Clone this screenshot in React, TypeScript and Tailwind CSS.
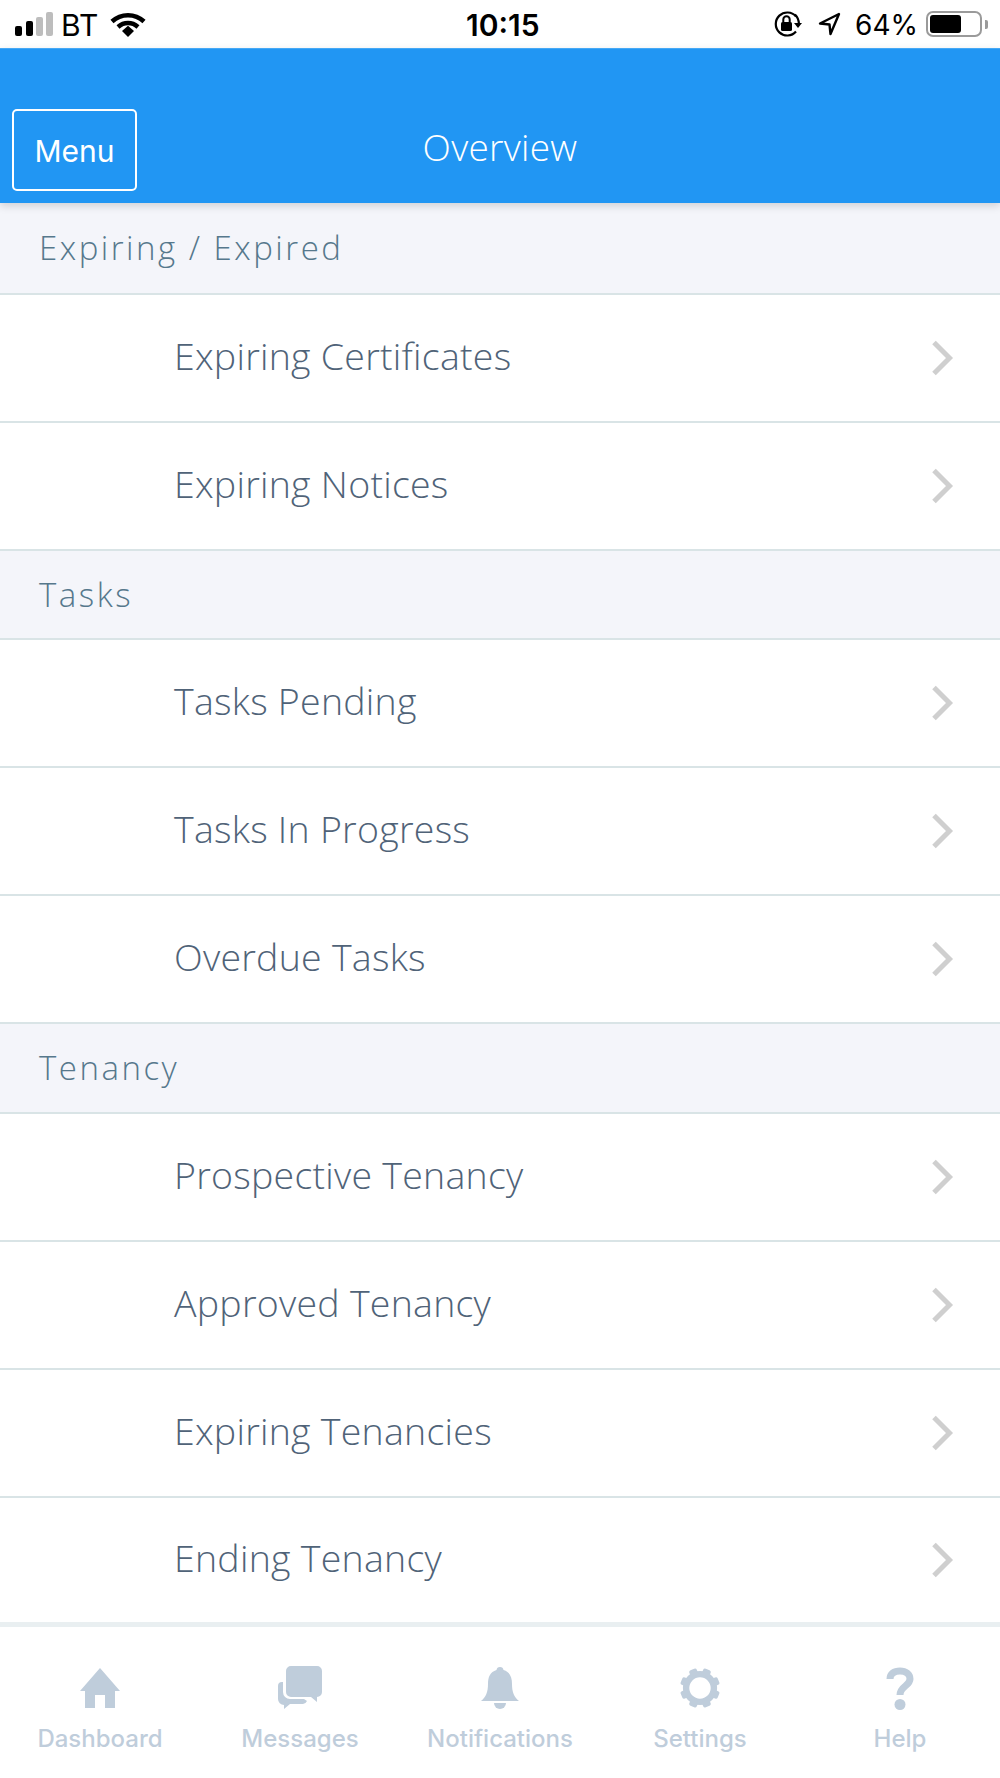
import React from "react";

const F1 = { fontFamily: '"Open Sans",sans-serif' };

function Chevron() {
  return (
    <svg width="24" height="38" viewBox="0 0 24 38" fill="none">
      <path d="M4 3.5L19.5 19L4 34.5" stroke="#cfcfcf" strokeWidth="5" />
    </svg>
  );
}
function Row({ t, last }: { t: string; last?: boolean }) {
  return (
    <div className={"bg-white flex items-center pl-[174px] pr-[46px] justify-between " + (last ? "h-[124px]" : "h-[128px] border-b-2 border-[#d9e4e6]")}>
      <span className="text-[37.5px] font-light text-[#506378] pb-[4px] tracking-[0.25px]" style={F1}>{t}</span>
      <Chevron />
    </div>
  );
}
function Head({ t, h }: { t: string; h: string }) {
  return (
    <div className={"bg-[#f4f5fa] border-b-2 border-[#d9e4e6] flex items-center pl-[39px] " + h}>
      <span className="text-[33px] font-light text-[#56788c] tracking-[2.5px]" style={F1}>{t}</span>
    </div>
  );
}
function Tab({ label, children }: { label: string; children: React.ReactNode }) {
  return (
    <div className="flex-1 flex flex-col items-center pt-[38px]">
      <div className="h-[46px] flex items-center justify-center">{children}</div>
      <span className="text-[24px] font-medium text-[#bfcddb] leading-[30px] mt-[13px]">{label}</span>
    </div>
  );
}
export default function App() {
  const teeth = [0, 45, 90, 135, 180, 225, 270, 315];
  return (
    <div className="w-[1000px] h-[1778px] flex flex-col overflow-hidden bg-white" style={{ fontFamily: '"Inter",sans-serif' }}>
      <div className="h-[48px] bg-white flex items-center justify-between pl-[15px] pr-[12px] text-[30px] text-black relative">
        <div className="flex items-center">
          <svg width="38" height="24" viewBox="0 0 38 24"><rect x="0" y="14" width="7" height="10" rx="2" fill="#000"/><rect x="11" y="9" width="7" height="15" rx="2" fill="#000"/><rect x="21" y="5" width="7" height="19" rx="2" fill="#bdbdbd"/><rect x="31" y="0" width="7" height="24" rx="2" fill="#bdbdbd"/></svg>
          <span className="ml-[8px] pt-[2px]">BT</span>
          <svg width="36" height="25" viewBox="0 0 36 25" fill="none" className="ml-[12px]">
            <path d="M2 9.5C11 1 25 1 34 9.5" stroke="#000" strokeWidth="4.5"/>
            <path d="M8 15C14 9.8 22 9.8 28 15" stroke="#000" strokeWidth="4.5"/>
            <path d="M12 19L18 13.8L24 19L18 25Z" fill="#000"/>
          </svg>
        </div>
        <span className="absolute left-[466px] pt-[2px] font-semibold">10:15</span>
        <div className="flex items-center">
          <svg width="28" height="26" viewBox="0 0 28 26" fill="none" className="mr-[16px]">
            <path d="M22 5.5A11.5 11.5 0 1 0 22 20.5" stroke="#000" strokeWidth="2.2"/>
            <path d="M21 3.5C23.5 6 24.8 9 25 13" stroke="#000" strokeWidth="2.2"/>
            <path d="M20 12H28L24 17Z" fill="#000"/>
            <rect x="7" y="11" width="11" height="9" rx="1.5" fill="#000"/>
            <path d="M9.3 11V8.5A3.2 3.2 0 0 1 15.7 8.5V11" stroke="#000" strokeWidth="2"/>
          </svg>
          <svg width="23" height="24" viewBox="0 0 23 24" fill="none" className="mr-[14px]">
            <path d="M21 2L2 11.5L11.5 12.5L12.5 22Z" stroke="#000" strokeWidth="2.4" strokeLinejoin="round"/>
          </svg>
          <span className="pt-[2px] text-[28px]">64%</span>
          <div className="ml-[8px] w-[56px] h-[26px] border-[2px] border-[#9a9a9a] rounded-[7px] p-[2px] flex">
            <div className="w-[31px] h-full bg-black rounded-[3px]" />
          </div>
          <div className="ml-[3px] w-[3px] h-[9px] bg-[#9a9a9a] rounded-r-[2px]" />
        </div>
      </div>
      <div className="h-[155px] bg-[#2196f3] border-t border-[#45a8f5] relative shadow-[0_3px_8px_rgba(0,0,0,0.15)] z-10 flex justify-center pt-[73px]">
        <div className="absolute left-[12px] top-[60px] w-[125px] h-[82px] border-2 border-white rounded-[5px] flex items-center justify-center text-white text-[30px] pt-[2px]">Menu</div>
        <div className="text-white text-[37px] font-light leading-[50px] tracking-[0.3px]" style={F1}>Overview</div>
      </div>
      <Head t="Expiring / Expired" h="h-[92px]" />
      <Row t="Expiring Certificates" /><Row t="Expiring Notices" />
      <Head t="Tasks" h="h-[89px]" />
      <Row t="Tasks Pending" /><Row t="Tasks In Progress" /><Row t="Overdue Tasks" />
      <Head t="Tenancy" h="h-[90px]" />
      <Row t="Prospective Tenancy" /><Row t="Approved Tenancy" /><Row t="Expiring Tenancies" /><Row t="Ending Tenancy" last />
      <div className="flex-1 border-t-[5px] border-[#e9eff1] flex">
        <Tab label="Dashboard">
          <svg width="40" height="42" viewBox="0 0 40 42" fill="#bfcddb"><path d="M20 1L40 24H35V41H25V28H15V41H5V24H0Z"/></svg>
        </Tab>
        <Tab label="Messages">
          <svg width="44" height="44" viewBox="0 0 44 44" fill="#bfcddb">
            <path d="M13 0H39A5 5 0 0 1 44 5V26A5 5 0 0 1 39 31V36L33 31H13A5 5 0 0 1 8 26V5A5 5 0 0 1 13 0Z"/>
            <path d="M4 16A4 4 0 0 0 0 20V33A6 6 0 0 0 6 39V43L12 38H25A5 5 0 0 0 29 35L26 33H12A7 7 0 0 1 5 26V16Z"/>
          </svg>
        </Tab>
        <Tab label="Notifications">
          <svg width="40" height="42" viewBox="0 0 40 42" fill="#bfcddb"><path d="M20 0A3.5 3.5 0 0 1 23.5 3C30 5 32 10 32 17C32 25 34 30 39 34H1C6 30 8 25 8 17C8 10 10 5 16.5 3A3.5 3.5 0 0 1 20 0Z"/><path d="M14 36H26A6 6 0 0 1 14 36Z"/></svg>
        </Tab>
        <Tab label="Settings">
          <svg width="40" height="40" viewBox="0 0 40 40" fill="none">
            <circle cx="20" cy="20" r="13.9" stroke="#bfcddb" strokeWidth="6.4"/>
            {teeth.map((a) => (
              <rect key={a} x="16" y="0" width="8" height="7" rx="2" fill="#bfcddb" transform={`rotate(${a + 22.5} 20 20)`} />
            ))}
          </svg>
        </Tab>
        <Tab label="Help">
          <svg width="28" height="43" viewBox="0 0 28 43" fill="none">
            <path d="M4 12C4 7 8 4 14 4C20 4 24 7.5 24 12C24 19 14 19 14 28" stroke="#bfcddb" strokeWidth="7"/>
            <circle cx="14" cy="37.5" r="5.5" fill="#bfcddb"/>
          </svg>
        </Tab>
      </div>
    </div>
  );
}
